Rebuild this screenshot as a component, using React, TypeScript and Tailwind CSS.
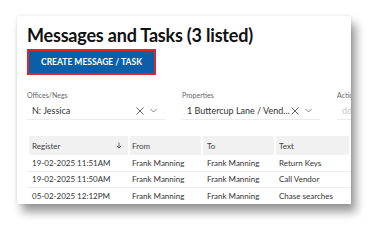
import React from 'react';

const rows = [
  { date: '19-02-2025 11:51AM', from: 'Frank Manning', to: 'Frank Manning', text: 'Return Keys' },
  { date: '19-02-2025 11:50AM', from: 'Frank Manning', to: 'Frank Manning', text: 'Call Vendor' },
  { date: '05-02-2025 12:12PM', from: 'Frank Manning', to: 'Frank Manning', text: 'Chase searches' },
];

const ClearIcon = () => (
  <svg width="8" height="8" viewBox="0 0 8 8" className="shrink-0">
    <path d="M0.5 0.5 L7.5 7.5 M7.5 0.5 L0.5 7.5" stroke="#555" strokeWidth="0.9" fill="none" />
  </svg>
);

const ChevronIcon = () => (
  <svg width="7" height="5" viewBox="0 0 7 5" className="shrink-0">
    <path d="M0.5 1 L3.5 4 L6.5 1" stroke="#666" strokeWidth="0.8" fill="none" />
  </svg>
);

const Filter: React.FC<{ label: string; value: string; placeholder?: boolean; clearable?: boolean }> = ({ label, value, placeholder, clearable = true }) => (
  <div className="w-[138px] shrink-0">
    <div className="text-[7px] leading-[9px] text-[#666]">{label}</div>
    <div className="mt-[2px] h-[18px] flex items-center border-b border-[#ececec] pl-[5px] pr-[8px]">
      <span className={`flex-1 truncate text-[9px] ${placeholder ? 'text-[#c8c8c8]' : 'text-[#333]'}`}>{value}</span>
      {clearable && (
        <div className="flex items-center gap-[6px]">
          <ClearIcon />
          <ChevronIcon />
        </div>
      )}
    </div>
  </div>
);

export default function App() {
  return (
    <div className="w-[386px] h-[241px] bg-white pt-[16px] pl-[17px]" style={{ fontFamily: 'Lato, "Noto Sans", sans-serif' }}>
      <div className="w-[334px] h-[188px] bg-white overflow-hidden shadow-[5px_8px_9px_rgba(0,0,0,0.4),0_0_3px_rgba(0,0,0,0.12)] pl-[10px]">
        <h1 className="mt-[7px] text-[18px] leading-[24px] font-bold text-[#111] tracking-[-0.2px]">Messages and Tasks (3 listed)</h1>
        <button className="mt-[2px] w-[129px] h-[26px] border-2 border-[#e0242c] bg-[#0b5ea8] text-white text-[8.5px] font-bold uppercase flex items-center justify-center">
          Create Message / Task
        </button>
        <div className="mt-[16px] flex gap-[17px] whitespace-nowrap">
          <Filter label="Offices/Negs" value="N: Jessica" />
          <Filter label="Properties" value="1 Buttercup Lane / Vend..." />
          <Filter label="Actions" value="dd" placeholder clearable={false} />
        </div>
        <div className="mt-[16px] ml-[2px] w-[400px] text-[8px] text-[#333] whitespace-nowrap">
          <div className="flex h-[19px] text-[#444]">
            <div className="w-[99px] mr-[2px] bg-[#f1f1f1] flex items-center pl-[3px] pr-[6px]">
              <span className="flex-1">Register</span>
              <svg width="6" height="7" viewBox="0 0 6 7">
                <path d="M3 0.5 V6 M0.8 3.8 L3 6 L5.2 3.8" stroke="#555" strokeWidth="0.9" fill="none" />
              </svg>
            </div>
            <div className="w-[71px] mr-[2px] bg-[#f1f1f1] flex items-center pl-[2px]">From</div>
            <div className="w-[71px] mr-[2px] bg-[#f1f1f1] flex items-center pl-[4px]">To</div>
            <div className="w-[73px] mr-[2px] bg-[#f1f1f1] flex items-center pl-[3px]">Text</div>
            <div className="w-[60px] bg-[#f1f1f1]"></div>
          </div>
          {rows.map((r, i) => (
            <div key={i} className={`flex h-[16.5px] items-center -ml-[2px] pl-[2px] ${i < rows.length - 1 ? 'border-b border-[#ececec]' : ''}`}>
              <div className="w-[101px] pl-[3px]">{r.date}</div>
              <div className="w-[73px] pl-[2px]">{r.from}</div>
              <div className="w-[73px] pl-[4px]">{r.to}</div>
              <div className="w-[75px] pl-[3px]">{r.text}</div>
            </div>
          ))}
        </div>
      </div>
    </div>
  );
}
